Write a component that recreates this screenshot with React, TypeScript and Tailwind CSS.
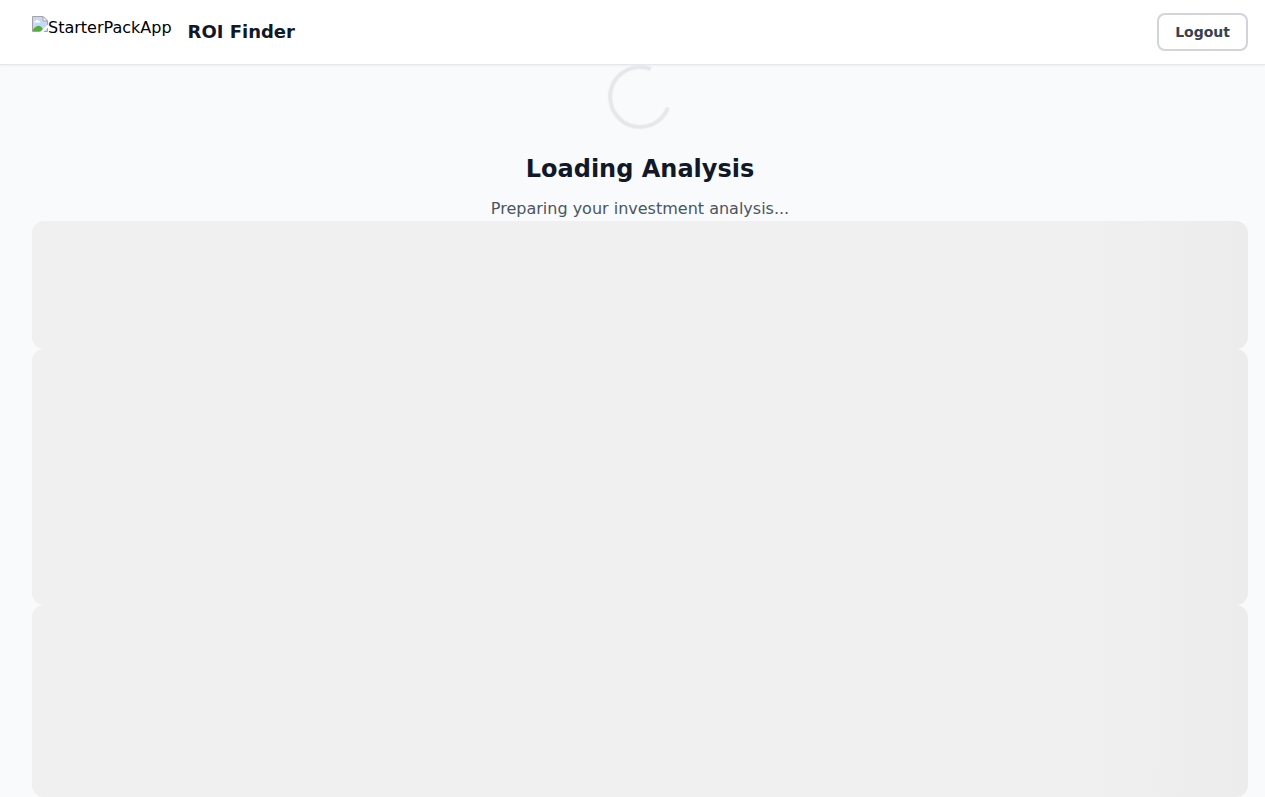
function MissingImageIcon() {
  return (
    <svg width="16" height="16" viewBox="0 0 16 16" aria-hidden="true" className="shrink-0">
      <path d="M0.5 0.5H11L15.5 5V15.5H0.5Z" fill="#c6d8fa" />
      <path d="M2 6.5C2 5.4 3 5 3.7 5C4.2 3.6 6.6 3.6 7 5.1C8 5.1 8.3 5.8 8.3 6.5Z" fill="#fff" />
      <path d="M1 15V13.5C3 11 5 9.8 6.5 9.8C8.5 9.8 10.5 11.5 11.5 15Z" fill="#55ad3c" />
      <path d="M0.5 15.5V0.5H11L15.5 5V15.5Z" fill="none" stroke="#a3a3a3" />
      <path d="M11 0.5V5H15.5Z" fill="#fff" stroke="#a3a3a3" />
      <path d="M16 8.5V11.5L11.5 16H8Z" fill="#fff" />
    </svg>
  );
}

function Skeleton({ height }: { height: string }) {
  return (
    <div
      className={`rounded-xl bg-[linear-gradient(90deg,#f0f0f0_87%,#e0e0e0_139%)] ${height}`}
    />
  );
}

export default function App() {
  return (
    <div className="min-h-screen bg-[#f9fafb] font-['DejaVu_Sans',sans-serif] text-base text-black">
      <header className="border-b border-gray-200 bg-white shadow-xs">
        <div className="flex h-16 items-center justify-between pr-[17px] pl-8">
          <div className="flex items-center gap-4">
            <a href="#" className="flex h-8 items-start">
              <MissingImageIcon />
              <span className="leading-6">StarterPackApp</span>
            </a>
            <span className="text-lg font-bold text-[#111827]">ROI Finder</span>
          </div>
          <button
            type="button"
            className="rounded-lg border-2 border-[#d1d5db] bg-white px-4 py-[9px] text-sm leading-4 font-semibold text-[#374151]"
          >
            Logout
          </button>
        </div>
      </header>
      <main className="pr-[17px] pl-8">
        <div className="flex flex-col items-center text-center" role="status">
          <div className="size-16 rotate-66 rounded-full border-4 border-[#e5e7eb] border-t-transparent will-change-transform" />
          <h1 className="mt-6 text-2xl font-bold text-[#111827]">Loading Analysis</h1>
          <p className="mt-3 text-[#4b5563]">Preparing your investment analysis...</p>
        </div>
        <Skeleton height="h-32" />
        <Skeleton height="h-64" />
        <Skeleton height="h-48" />
      </main>
    </div>
  );
}
